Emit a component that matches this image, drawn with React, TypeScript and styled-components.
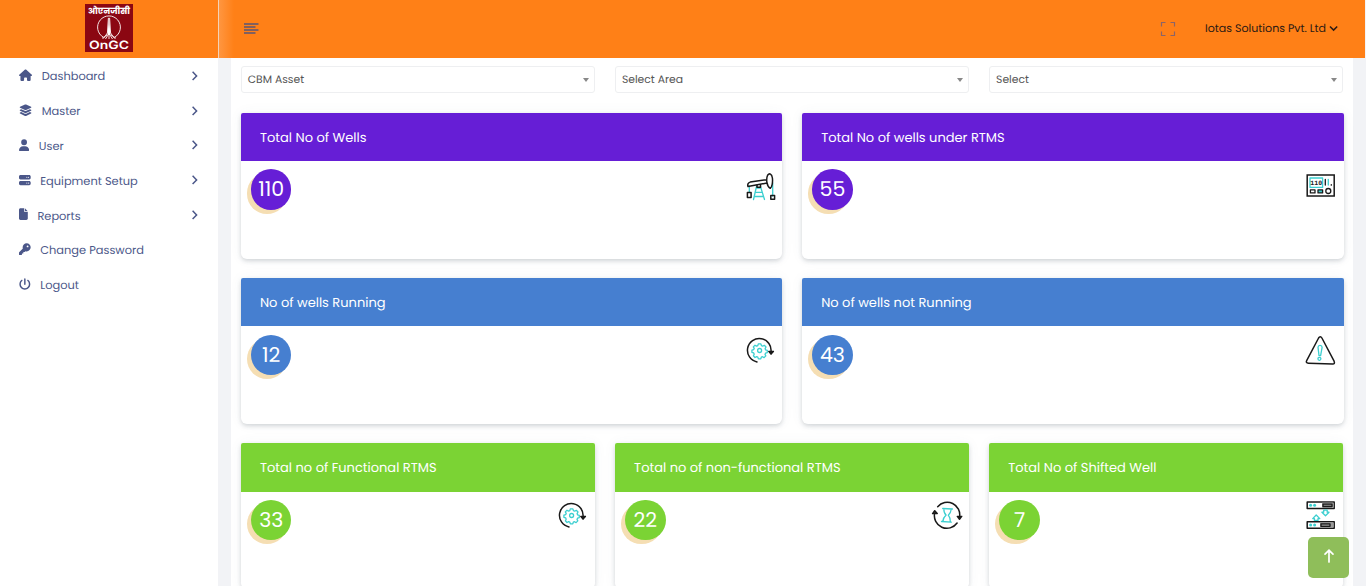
import React from 'react';
import styled, { createGlobalStyle } from 'styled-components';
import { FaHouse, FaLayerGroup, FaUser, FaServer, FaFile, FaKey, FaPowerOff } from 'react-icons/fa6';

const GlobalStyle = createGlobalStyle`
  * { box-sizing: border-box; }
  html, body { margin: 0; height: 100%; overflow: hidden; }
  body {
    background: #f2f3f6;
    font-family: Poppins, Inter, "Noto Sans", sans-serif;
    text-rendering: geometricPrecision;
  }
`;

const Page = styled.div`
  display: flex;
  width: 1366px;
  height: 586px;
  overflow: hidden;
`;
const Sidebar = styled.aside`
  width: 218px;
  flex: none;
  background: #fff;
`;
const Brand = styled.div`
  height: 58px;
  display: flex;
  justify-content: center;
  padding-top: 4px;
  background: #ff8017;
`;
const Nav = styled.nav`
  display: flex;
  flex-direction: column;
  padding-top: 1px;
`;
const NavItem = styled.a`
  display: flex;
  align-items: center;
  height: 34.8px;
  padding: 0 19px;
  color: #4b5789;
  & > svg { margin-top: -1px; }
`;
const IconSlot = styled.span<{ $w: number }>`
  display: flex;
  width: ${p => p.$w}px;
  margin-right: 9.6px;
  margin-top: -2px;
  svg { display: block; width: ${p => p.$w}px; height: 12.4px; }
`;
const NavText = styled.span`
  flex: 1;
  font-size: 11.4px;
  line-height: 20px;
  white-space: nowrap;
`;
const Main = styled.div`
  flex: 1;
  display: flex;
  flex-direction: column;
`;
const Topbar = styled.header`
  flex: none;
  height: 58px;
  width: 1147px;
  display: flex;
  align-items: center;
  justify-content: space-between;
  padding: 0 27px 1px 25px;
  border-left: 1px solid #f4d3b8;
  background: linear-gradient(90deg, #ff9640 0, #ff8017 15px);
`;
const Account = styled.div`
  display: flex;
  align-items: center;
  color: #2c1a14;
  font-size: 11.05px;
  white-space: nowrap;
`;
const AccountName = styled.span`
  margin: -1px 3px 0 29px;
  width: 121px;
`;
const Panel = styled.main`
  flex: 1;
  margin: 0 13px 0 13px;
  padding: 8px 9.5px 0 9.6px;
  background: #fff;
`;
const Row = styled.div<{ $cols: number }>`
  display: grid;
  grid-template-columns: repeat(${p => p.$cols}, 1fr);
  gap: 19.5px;
  margin-bottom: 19.2px;
`;
const Select = styled.div`
  display: flex;
  align-items: center;
  justify-content: space-between;
  height: 27.4px;
  padding: 0 5px 0 6.2px;
  border: 1px solid #eeeff1;
  border-radius: 3px;
  color: #555;
  font-size: 10.8px;
`;
const Caret = styled.i`
  border: 3.2px solid transparent;
  border-top: 4px solid #888;
  border-bottom: 0;
`;
const Card = styled.section`
  height: 146px;
  border-radius: 3px 3px 6px 6px;
  background: #fff;
  box-shadow: 0 2px 4px rgba(70, 80, 95, 0.22), 0 0 14px rgba(80, 90, 110, 0.05);
`;
const CardHead = styled.h2<{ $color: string }>`
  margin: 0;
  height: 48.7px;
  padding: 0 19.4px;
  line-height: 49.5px;
  border-radius: 2px 2px 0 0;
  background: ${p => p.$color};
  color: #fff;
  font-size: 13px;
  font-weight: 400;
  white-space: nowrap;
`;
const CardBody = styled.div`
  display: flex;
  justify-content: space-between;
  padding: 8.2px 6.8px 0 10.4px;
`;
const Count = styled.div<{ $color: string }>`
  width: 40.5px;
  height: 40.5px;
  border-radius: 50%;
  background: ${p => p.$color};
  box-shadow: -4px 4px 0 #f5deb3;
  color: #fff;
  font-size: 20.5px;
  line-height: 42px;
  text-align: center;
`;
const ArtBox = styled.svg`
  display: block;
  margin-top: 0.6px;
`;
const ToTop = styled.button`
  position: fixed;
  left: 1308px;
  top: 537px;
  width: 41px;
  height: 41px;
  padding: 0 0 2px;
  border: 0;
  border-radius: 5px;
  background: #8fbe5a;
  display: flex;
  align-items: center;
  justify-content: center;
`;

const ink = { fill: 'none', stroke: '#191919', strokeWidth: 1.5, strokeLinecap: 'round', strokeLinejoin: 'round' } as const;
const teal = { ...ink, stroke: '#3ccfd0', strokeWidth: 1.3 } as const;

const Art = ({ children }: { children: React.ReactNode }) => (
  <ArtBox width="32" height="32" viewBox="0 0 32 32">{children}</ArtBox>
);

const PumpIcon = () => (
  <Art>
    <g {...teal}><path d="M5.3 16v6M28.7 13v13M12.500 16.500l-3 13M16.500 16.500l4 13M12.300 18h4.500M11.400 22.300h6.800M10.400 26.500h9" /></g>
    <g {...ink}>
      <path d="M4 16.500c-.8-2.200.4-3.900 2.200-4.400L22.500 9.700M4 16.500 23.200 13M23.600 5.200c1.800-2.400 4.200-1.500 4.800 2.800.5 4.200-.4 9.200-2.100 10.300-1.600-1-3-3.500-3.400-6-.4-2.600-.2-5.200.7-7.100z" />
      <path d="M13 15.300v2h3.500v-2.500M3.400 22.400h3.700v5H3.400zM26.800 25.500h3.800v3.700h-3.800z" />
    </g>
  </Art>
);

const MeterIcon = () => (
  <Art>
    <rect x="2.2" y="5" width="27" height="21" {...ink} strokeLinejoin="miter" />
    <rect x="5" y="8" width="12.600" height="9.400" {...teal} />
    <text x="11.300" y="15" fontSize="6.600" fontWeight="700" fontFamily="Liberation Mono, monospace" textAnchor="middle" fill="#222">110</text>
    <g {...ink} strokeWidth={1.3}>
      <path d="M20.300 9.400v5.600M26.300 14.600v.6" /><rect x="5.400" y="19.900" width="4.600" height="3" />
      <rect x="13" y="19.900" width="4.600" height="3" fill="#3ccfd0" /><circle cx="23.300" cy="21" r="2.500" />
    </g>
    <path d="M23.300 9.400v5.600" {...teal} />
  </Art>
);

const GearRunIcon = () => (
  <Art>
    <g transform="translate(1.500 -.3)">
      <g {...ink}><path d="M11.500 27.200A11.800 11.800 0 1 1 25.400 17.600M23.300 16.700l2.200 2.700 2.300-2.700z" /></g>
      <g {...teal}>
        <circle cx="14.100" cy="15.800" r="2" />
        <path d="M12.700 9.800h2.600l.5 1.800 1.300.5 1.600-.9 1.700 1.700-.9 1.600.5 1.300 1.700.5v2.200l-1.800.6-.5 1.200.8 1.500-1.700 1.700-1.600-.9-1.200.5-.5 1.700h-2.400l-.6-1.800-1.200-.5-1.600.9-1.600-1.700.8-1.600-.5-1.300-1.800-.6v-2.100l1.800-.6.5-1.200-.9-1.500 1.700-1.700 1.600.9 1.200-.5z" transform="translate(.1 -.6)" />
      </g>
    </g>
  </Art>
);

const WarningIcon = () => (
  <Art>
    <path d="M13.600 3c1-1.700 2.400-1.600 3.300 0l12.200 23.200c.8 1.900.2 2.900-1.500 2.800L3.400 28.200c-2-.1-2.600-1.100-1.600-2.900z" {...ink} />
    <g {...teal}><path d="M13 12.200c.2-2.600 4-2.500 4.100.1l-1.500 8.300H14z" /><circle cx="14.400" cy="23.800" r="1.500" /></g>
  </Art>
);

const HourglassIcon = () => (
  <Art>
    <g transform="translate(.5 .2)">
      <g {...ink}>
        <path d="M6.200 6.500A12.500 12.500 0 0 1 28 17M25.800 16.200l2.200 2.800 2.200-2.800zM25.600 22.800A12.500 12.500 0 0 1 3.200 12.800M1.100 13.400l2.100-2.900 2.500 2.700z" />
      </g>
      <g {...teal}><path d="M11.200 8.300l9.700.5M10 21.300l9.800.6M12.300 8.500c0 3.200.5 4.900 2.300 6.300-2 1.800-2.900 3.400-3.300 6.500M19.800 8.800c-.4 3.200-1.200 4.800-3 6.200 1.500 1.800 2.100 3.600 2 6.700" /></g>
    </g>
  </Art>
);

const ShiftIcon = () => (
  <Art>
    {[1.9, 21.7].map((y, i) => (
      <g key={y}>
        <rect x="2.200" y={y} width="27" height="6.600" {...ink} />
        <path d={`M${17 - i * 2} ${y + 3.3}h${11.5 + i * 2}`} stroke="#999" strokeWidth="5" />
        <rect x={18 - i * 2} y={y + 2.2} width="9" height="2.400" {...ink} strokeWidth={1.3} />
        <g fill="#3ccfd0"><circle cx="5.600" cy={y + 3.3} r="1.500" /><circle cx="9.600" cy={y + 3.3} r="1.500" /></g>
      </g>
    ))}
    <g {...teal}><path d="M18.700 10.200v2h-1.800l3.600 3.500 3.500-3.500h-1.800v-2zM9.400 20.400v-1.800H7.700l3.500-3.600 3.600 3.600H13v1.800z" /></g>
  </Art>
);

const Logo = () => (
  <svg width="48" height="48" viewBox="0 0 48 48">
    <rect width="48" height="48" fill="#8b0712" />
    <text x="24" y="9.700" fontSize="8.300" fontWeight="700" fill="#fff" textAnchor="middle" textLength="42" lengthAdjust="spacingAndGlyphs">ओएनजीसी</text>
    <g fill="none" stroke="#f4e3e3" strokeWidth="1">
      <path d="M18.500 33.300a11.400 11.400 0 1 1 11 0" />
      <path d="M23.400 14l-1 15-3.900 5.500M24.600 14l1 15 3.900 5.500" />
      <path d="M22 31l-5 3.300M26 31l5 3.300M23 31l-2.500 4M25 31l2.500 4M24 31v4" />
    </g>
    <path d="M24 12l1.500 19h-3z" fill="#fff" />
    <text x="24" y="45.300" fontSize="11.400" fontWeight="600" fontFamily="Inter, sans-serif" fill="#fff" textAnchor="middle" textLength="40" lengthAdjust="spacingAndGlyphs">OnGC</text>
  </svg>
);

const Chevron = ({ down = false }: { down?: boolean }) => (
  <svg width="9" height="10" viewBox="0 0 9 10" fill="none" stroke="currentColor" strokeWidth="1.5">
    <path d={down ? 'M1 2.500l3.600 3.600L8.200 2.500' : 'M2.600 .8l4 4.100-4 4.100'} />
  </svg>
);

const navItems = [
  { text: 'Dashboard', icon: <FaHouse />, w: 13.1, sub: true },
  { text: 'Master', icon: <FaLayerGroup />, w: 13.1, sub: true },
  { text: 'User', icon: <FaUser />, w: 10.2, sub: true },
  { text: 'Equipment Setup', icon: <FaServer />, w: 11.7, sub: true },
  { text: 'Reports', icon: <FaFile />, w: 8.8, sub: true },
  { text: 'Change Password', icon: <FaKey />, w: 11.7, sub: false },
  { text: 'Logout', icon: <FaPowerOff />, w: 11.7, sub: false },
];

const PURPLE = '#661ed6';
const BLUE = '#467fd0';
const GREEN = '#7bd334';

const rows = [
  [
    { title: 'Total No of Wells', n: 110, color: PURPLE, icon: <PumpIcon /> },
    { title: 'Total No of wells under RTMS', n: 55, color: PURPLE, icon: <MeterIcon /> },
  ],
  [
    { title: 'No of wells Running', n: 12, color: BLUE, icon: <GearRunIcon /> },
    { title: 'No of wells not Running', n: 43, color: BLUE, icon: <WarningIcon /> },
  ],
  [
    { title: 'Total no of Functional RTMS', n: 33, color: GREEN, icon: <GearRunIcon /> },
    { title: 'Total no of non-functional RTMS', n: 22, color: GREEN, icon: <HourglassIcon /> },
    { title: 'Total No of Shifted Well', n: 7, color: GREEN, icon: <ShiftIcon /> },
  ],
];

export default function App() {
  return (
    <Page>
      <GlobalStyle />
      <Sidebar>
        <Brand><Logo /></Brand>
        <Nav>
          {navItems.map(item => (
            <NavItem key={item.text}>
              <IconSlot $w={item.w}>{item.icon}</IconSlot>
              <NavText>{item.text}</NavText>
              {item.sub && <Chevron />}
            </NavItem>
          ))}
        </Nav>
      </Sidebar>
      <Main>
        <Topbar>
          <svg width="15" height="11" viewBox="0 0 15 11" stroke="#5a5577" strokeWidth="1.600">
            <path d="M0 1h14.500M0 4h11.500M0 7h14.500M0 10h11.500" />
          </svg>
          <Account>
            <svg width="16" height="16" viewBox="0 0 16 16" fill="none" stroke="#8a6468" strokeWidth="1.200">
              <path d="M1.500 5.500V1.500h4M10.500 1.500h4v4M14.500 10.500v4h-4M5.500 14.500h-4v-4" />
            </svg>
            <AccountName>Iotas Solutions Pvt. Ltd</AccountName>
            <Chevron down />
          </Account>
        </Topbar>
        <Panel>
          <Row $cols={3}>
            <Select>CBM Asset<Caret /></Select>
            <Select>Select Area<Caret /></Select>
            <Select>Select<Caret /></Select>
          </Row>
          {rows.map((cards, i) => (
            <Row key={i} $cols={cards.length}>
              {cards.map(c => (
                <Card key={c.title}>
                  <CardHead $color={c.color}>{c.title}</CardHead>
                  <CardBody>
                    <Count $color={c.color}>{c.n}</Count>
                    {c.icon}
                  </CardBody>
                </Card>
              ))}
            </Row>
          ))}
        </Panel>
      </Main>
      <ToTop aria-label="Back to top">
        <svg width="12" height="15" viewBox="0 0 12 15" fill="none" stroke="#fff" strokeWidth="1.700" strokeLinecap="round">
          <path d="M6 13V1.500M2 5.200L6 1.300l4 3.900" />
        </svg>
      </ToTop>
    </Page>
  );
}
